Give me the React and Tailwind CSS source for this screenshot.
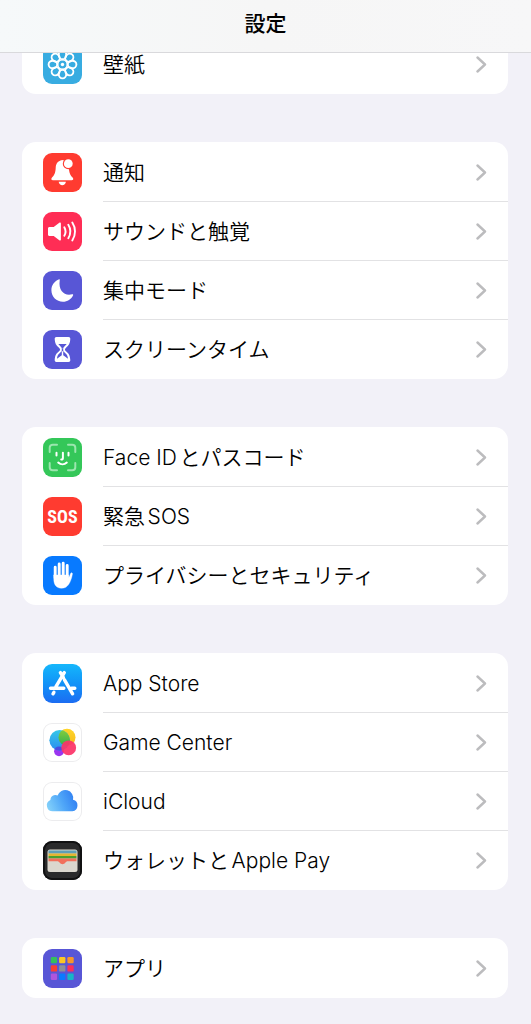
import React from 'react';
import clsx from 'clsx';

const WallpaperIcon = () => (
  <svg viewBox="0 0 39 39" className="size-full" fill="none" stroke="#fff" strokeWidth="1.9">
    {[0, 45, 90, 135, 180, 225, 270, 315].map((angle) => (
      <g key={angle} transform={`rotate(${angle} 19.5 19.5)`}>
        <ellipse cx="19.5" cy="9.9" rx="3.8" ry="4.3" />
      </g>
    ))}
    <circle cx="19.5" cy="19.5" r="4.6" strokeWidth="1.2" />
    <circle cx="19.5" cy="19.5" r="1.7" fill="#fff" stroke="none" />
  </svg>
);

const BellIcon = () => (
  <svg viewBox="0 0 39 39" className="size-full" fill="#fff">
    <path d="M19.3 7C14 8 12.8 11.5 12.7 15c-.2 5-1.7 7.5-3.7 9.5-1.2 1.3-.7 2.8 1 2.8h18.6c1.7 0 2.2-1.5 1-2.8-2-2-3.5-4.5-3.7-9.5-.1-3.5-1.4-7-6.6-8z" />
    <path d="M15.7 28.8h7.2c-.3 2.2-1.8 3.4-3.6 3.4s-3.3-1.2-3.6-3.4z" />
    <circle cx="25.3" cy="10.7" r="5.5" fill="#ff3b30" />
    <circle cx="25.3" cy="10.7" r="4.4" />
  </svg>
);

const SpeakerIcon = () => (
  <svg viewBox="0 0 39 39" className="size-full" fill="none" stroke="#fff" strokeWidth="1.9" strokeLinecap="round">
    <path
      d="M6.5 15h4.2l5.6-4.3c.8-.6 1.6-.2 1.6.8v16c0 1-.8 1.4-1.6.8L10.7 24H6.5c-.9 0-1.5-.6-1.5-1.5v-6c0-.9.6-1.5 1.5-1.5z"
      fill="#fff"
      stroke="none"
    />
    <path d="M21.3 15.2c1.5 2.6 1.5 6 0 8.6M25.3 12.8c2.5 4 2.5 9.4 0 13.4M29.3 10.5c3.6 5.4 3.6 12.6 0 18" />
  </svg>
);

const MoonIcon = () => (
  <svg viewBox="0 0 39 39" className="size-full" fill="#fff">
    <path d="M16.2 8.3C11.5 10 8.4 14.3 8.4 19.2c0 6.4 5.1 11.5 11.5 11.5 4.5 0 8.4-2.6 10.2-6.5.3-.7-.2-1.2-.9-1-7.3 2.2-14-3.2-12.5-13.7.1-.8 0-1.4-.5-1.2z" />
  </svg>
);

const HourglassIcon = () => (
  <svg viewBox="0 0 39 39" className="size-full">
    <path
      d="M13.5 7h12c1.2 0 1.9.8 1.8 2-.3 4.5-1.4 6.3-4.3 8.7-1.4 1.2-1.4 2.4 0 3.6 2.9 2.4 4 4.2 4.3 8.7.1 1.2-.6 2-1.8 2h-12c-1.2 0-1.900-.8-1.800-2 .3-4.500 1.400-6.300 4.300-8.700 1.400-1.200 1.400-2.400 0-3.600-2.900-2.400-4-4.200-4.300-8.700-.1-1.200.6-2 1.800-2z"
      fill="#fff"
    />
    <path d="M15.3 14h8.4c-.8 1.4-3.5 2.7-3.5 4.8h-1.4c0-2.1-2.7-3.4-3.5-4.8z" fill="#5856d6" />
    <path d="M18.8 19h1.4v1.5c.2 2 4.6 3 4.8 8.3l-4.8-3.5v-4h-1.4v4L14 28.8c.2-5.3 4.6-6.3 4.8-8.3z" fill="#5856d6" />
  </svg>
);

const FaceIdIcon = () => (
  <svg viewBox="0 0 39 39" className="size-full" fill="none" stroke="#fff" strokeWidth="2" strokeLinecap="round">
    <path
      d="M6.7 14V9.700a3 3 0 0 1 3-3H14M25 6.700h4.300a3 3 0 0 1 3 3V14M32.300 25v4.300a3 3 0 0 1-3 3H25M14 32.300H9.700a3 3 0 0 1-3-3V25"
      stroke="#9be6ae"
    />
    <path d="M13.5 14.8v2.700M25.500 14.800v2.700M19.900 14.800v5.200c0 1-.6 1.600-1.700 1.600M15.200 24.600c2.500 2.300 6.100 2.300 8.600 0" />
  </svg>
);

const HandIcon = () => (
  <svg viewBox="0 0 39 39" className="size-full" fill="#fff" stroke="#fff" strokeLinecap="round" strokeLinejoin="round">
    <path d="M12.2 11.2V22M16.200 8v13M20.200 7.300V21M24.200 9.500V23" fill="none" strokeWidth="2.9" />
    <path d="M10.8 19h14.8v3.200c.8-1.400 1.400-3.300 2-4.700.5-1.200 2-.8 1.800.5-.6 4-2 8-4 10.800-1.800 2.500-4 3.400-7 3.400-5 0-7.600-3.700-7.600-8.700z" strokeWidth=".4" />
  </svg>
);

const AppStoreIcon = () => (
  <svg viewBox="0 0 39 39" className="size-full" fill="none" stroke="#fff" strokeWidth="3.4" strokeLinecap="round">
    <path d="M21.3 8.600L12.800 22.900M10.900 28.300l-.9 1.500M17.400 8.600l3 5M21.500 15.800l8.100 14M7.500 24.200h13.300M28.500 24.200h3.300" />
  </svg>
);

const GameCenterIcon = () => (
  <svg viewBox="0 0 39 39" className="size-full">
    <defs>
      <linearGradient id="gcBlue" x1="0" y1="0" x2="0" y2="1">
        <stop offset="0" stopColor="#35c8e8" />
        <stop offset="1" stopColor="#2a8cf0" />
      </linearGradient>
      <linearGradient id="gcYellow" x1="0" y1="0" x2="0" y2="1">
        <stop offset="0" stopColor="#ffd52b" />
        <stop offset="1" stopColor="#f5ba1a" />
      </linearGradient>
      <linearGradient id="gcGreen" x1="0" y1="0" x2="0" y2="1">
        <stop offset="0" stopColor="#8bcf3a" />
        <stop offset="1" stopColor="#32b050" />
      </linearGradient>
      <clipPath id="gcClip">
        <circle cx="16.7" cy="17.3" r="10.3" />
      </clipPath>
    </defs>
    <circle cx="16" cy="28.3" r="4.9" fill="#9a35f0" />
    <circle cx="24" cy="14.3" r="8.5" fill="url(#gcYellow)" />
    <circle cx="16.7" cy="17.3" r="10.3" fill="url(#gcBlue)" />
    <g clipPath="url(#gcClip)">
      <circle cx="24" cy="14.3" r="8.5" fill="url(#gcGreen)" />
      <circle cx="16" cy="28.3" r="4.9" fill="#4b4be0" />
    </g>
    <circle cx="25.7" cy="24.8" r="7.4" fill="#fc3468" fillOpacity=".93" />
  </svg>
);

const CloudIcon = () => (
  <svg viewBox="0 0 39 39" className="size-full">
    <defs>
      <linearGradient id="cloudFill" x1="0" y1=".7" x2="1" y2=".4">
        <stop offset="0" stopColor="#82d0fa" />
        <stop offset=".5" stopColor="#4fa6f8" />
        <stop offset="1" stopColor="#2f7df2" />
      </linearGradient>
    </defs>
    <path
      d="M10 29.2a5.9 5.9 0 0 1-2.6-11.300 4.900 4.900 0 0 1 7.200-4.400 8 8 0 0 1 15.400 4.300 5.800 5.800 0 0 1-.6 11.400z"
      fill="url(#cloudFill)"
    />
  </svg>
);

const WalletIcon = () => (
  <svg viewBox="0 0 39 39" className="size-full">
    <defs>
      <clipPath id="walletClip">
        <rect x="4.5" y="8.5" width="30" height="22.5" rx="2.5" />
      </clipPath>
    </defs>
    <g clipPath="url(#walletClip)">
      <rect x="4" y="8" width="31" height="24" fill="#dbd7ce" />
      <rect x="5.5" y="9.5" width="28" height="3" fill="#5e9fb8" />
      <rect x="5.5" y="12.5" width="28" height="2.5" fill="#e6b532" />
      <rect x="5.5" y="15" width="28" height="2.5" fill="#4ba02f" />
      <path d="M5.5 17.500h28v2.700h-8.500c-1.500 0-2 .6-2.500 1.300-1.700 2.200-4.300 2.200-6 0-.5-.7-1-1.300-2.500-1.300H5.500z" fill="#f2705b" />
    </g>
  </svg>
);

const appTiles = ['#34c05c', '#fcc624', '#f8962a', '#fb3d33', '#8e8e98', '#fb2f5c', '#ae55dd', '#0a7aff', '#16b6c6'];

const AppsIcon = () => (
  <svg viewBox="0 0 39 39" className="size-full">
    {appTiles.map((fill, i) => (
      <rect key={fill} x={7.8 + (i % 3) * 8.3} y={8 + Math.floor(i / 3) * 8.3} width="6.3" height="6.3" rx="1.2" fill={fill} />
    ))}
  </svg>
);

const SosIcon = () => (
  <span className="font-['Liberation_Sans_Narrow','Roboto_Condensed',Roboto,sans-serif] text-[18px] leading-none font-bold text-white">
    SOS
  </span>
);

const sections = [
  [{ label: '壁紙', icon: WallpaperIcon, tile: 'bg-[#38ace1]' }],
  [
    { label: '通知', icon: BellIcon, tile: 'bg-[#ff3b30]' },
    { label: 'サウンドと触覚', icon: SpeakerIcon, tile: 'bg-[#ff2d55]' },
    { label: '集中モード', icon: MoonIcon, tile: 'bg-[#5856d6]' },
    { label: 'スクリーンタイム', icon: HourglassIcon, tile: 'bg-[#5856d6]' }
  ],
  [
    { label: 'Face IDとパスコード', icon: FaceIdIcon, tile: 'bg-[#34c759]' },
    { label: '緊急SOS', icon: SosIcon, tile: 'bg-[#ff3b30]' },
    { label: 'プライバシーとセキュリティ', icon: HandIcon, tile: 'bg-[#087aff]' }
  ],
  [
    { label: 'App Store', icon: AppStoreIcon, tile: 'bg-linear-to-b from-[#17b7fb] to-[#1c6cf2]' },
    { label: 'Game Center', icon: GameCenterIcon, tile: 'bg-white inset-ring inset-ring-[#ececee]' },
    { label: 'iCloud', icon: CloudIcon, tile: 'bg-white inset-ring inset-ring-[#ececee]' },
    { label: 'ウォレットとApple Pay', icon: WalletIcon, tile: 'bg-[#2a2a2b] inset-ring-2 inset-ring-[#111112]' }
  ],
  [{ label: 'アプリ', icon: AppsIcon, tile: 'bg-[#5856d6]' }]
];

function SettingsRow({ label, icon: Icon, tile }) {
  return (
    <li className="group">
      <a href="#" className="flex items-center gap-[21px] pl-[21px]">
        <span className={clsx('flex size-[39px] shrink-0 items-center justify-center overflow-hidden rounded-[9px]', tile)}>
          <Icon />
        </span>
        <span className="flex h-[59px] flex-1 items-center justify-between border-b border-[#e2e2e4] pr-[21px] group-last:border-transparent">
          <span className="pt-0.5 text-[21px] leading-7 font-[350] [text-autospace:normal]">{label}</span>
          <svg viewBox="0 0 11 17" className="h-[17px] w-[11px]" fill="none" stroke="#bcbcbe" strokeWidth="2.4" strokeLinecap="round" strokeLinejoin="round">
            <path d="M1.5 1.5l7.5 7-7.5 7" />
          </svg>
        </span>
      </a>
    </li>
  );
}

export default function App() {
  return (
    <div className="min-h-screen bg-[#f2f1f8] font-[Inter,'Noto_Sans_CJK_JP',sans-serif] text-black" lang="ja">
      {/* Title bar stays above the scrolled list */}
      <header className="fixed inset-x-0 top-0 z-10 flex h-[53px] justify-center border-b border-[#d9d9dc] bg-linear-to-r from-[#f6f9fa] via-[#f6f6f6] to-[#f7f7f8] pt-2.5">
        <h1 className="text-[21px] leading-7 font-medium">設定</h1>
      </header>

      <main className="flex flex-col gap-12 pt-[34px] pr-[23px] pb-[26px] pl-[22px]">
        {sections.map((rows) => (
          <ul key={rows[0].label} className="overflow-hidden rounded-[14px] bg-white pt-px">
            {rows.map((row) => (
              <SettingsRow key={row.label} {...row} />
            ))}
          </ul>
        ))}
      </main>
    </div>
  );
}
